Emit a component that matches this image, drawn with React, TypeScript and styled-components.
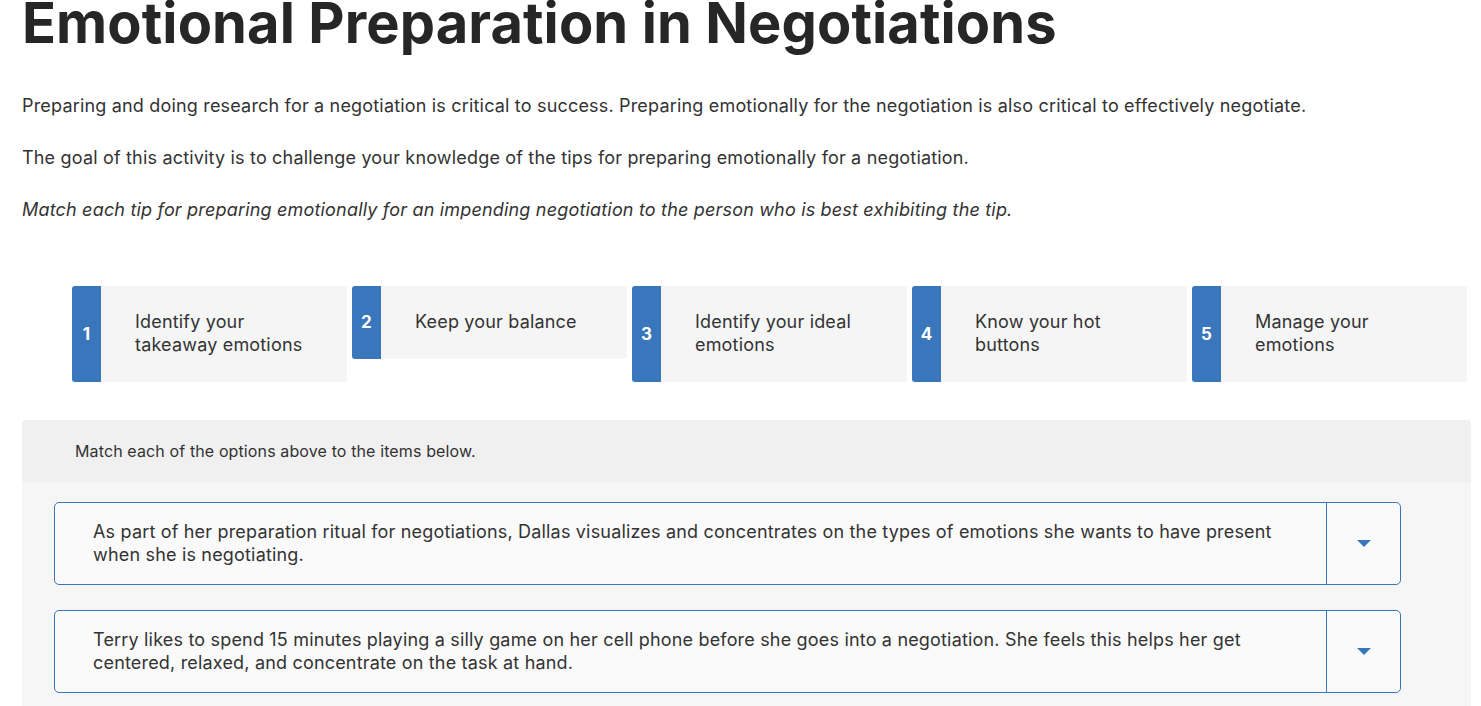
import React from "react"
import styled, { createGlobalStyle } from "styled-components"

const GlobalStyle = createGlobalStyle`
    html, body {
        margin: 0;
        padding: 0;
        background: #ffffff;
    }
    body {
        font-family: Inter, "Liberation Sans", Arial, sans-serif;
        color: #333333;
        letter-spacing: 0.18px;
        -webkit-font-smoothing: antialiased;
    }
`

const Page = styled.div`
    padding: 0 10px 0 22px;
    overflow: hidden;
`

const Title = styled.h1`
    margin: 0;
    font-size: 56px;
    line-height: 0.85;
    font-weight: 700;
    letter-spacing: 0.1px;
    color: #262626;
`

const Intro = styled.p<{ $italic?: boolean }>`
    margin: 0 0 26px;
    font-size: 18px;
    line-height: 26px;
    font-style: ${p => (p.$italic ? "italic" : "normal")};
    &:first-of-type {
        margin-top: 45px;
    }
`

const TipRow = styled.div`
    display: flex;
    align-items: flex-start;
    gap: 5px;
    margin: 63px 0 0 50px;
`

const TipCard = styled.div`
    display: flex;
    width: 275px;
    background: #f5f5f5;
    border-radius: 3px;
    overflow: hidden;
`

const NumberTab = styled.div`
    flex: 0 0 29px;
    display: flex;
    align-items: center;
    justify-content: center;
    background: #3a76bb;
    color: #ffffff;
    font-weight: 700;
    font-size: 17px;
`

const TipText = styled.div`
    padding: 24px 40px 26px 34px;
    font-size: 18px;
    line-height: 23px;
`

const MatchPanel = styled.section`
    margin-top: 38px;
    background: #f6f6f6;
    border-radius: 4px 4px 0 0;
    overflow: hidden;
`

const PanelHeader = styled.div`
    display: flex;
    align-items: center;
    height: 62px;
    padding-left: 53px;
    background: #f0f0f0;
    font-size: 16px;
    letter-spacing: 0.12px;
`

const PanelBody = styled.div`
    display: flex;
    flex-direction: column;
    gap: 25px;
    padding: 20px 70px 20px 32px;
`

const MatchItem = styled.div`
    display: flex;
    border: 1px solid #3a76bb;
    border-radius: 5px;
    background: #fafafa;
`

const ItemText = styled.div`
    flex: 1;
    padding: 17px 38px 18px 38px;
    font-size: 18px;
    line-height: 23px;
`

const DropButton = styled.div`
    flex: 0 0 73px;
    display: flex;
    align-items: center;
    justify-content: center;
    border-left: 1px solid #3a76bb;
`

const Caret = styled.span`
    width: 0;
    height: 0;
    border-left: 7px solid transparent;
    border-right: 7px solid transparent;
    border-top: 7px solid #3a76bb;
`

const tips = [
    "Identify your takeaway emotions",
    "Keep your balance",
    "Identify your ideal emotions",
    "Know your hot buttons",
    "Manage your emotions",
]

const items = [
    "As part of her preparation ritual for negotiations, Dallas visualizes and concentrates on the types of emotions she wants to have present when she is negotiating.",
    "Terry likes to spend 15 minutes playing a silly game on her cell phone before she goes into a negotiation. She feels this helps her get centered, relaxed, and concentrate on the task at hand.",
]

const App: React.FC = () => {
    return (
        <Page>
            <GlobalStyle />
            <Title>Emotional Preparation in Negotiations</Title>
            <Intro>
                Preparing and doing research for a negotiation is critical to success. Preparing emotionally for the negotiation is also critical to effectively negotiate.
            </Intro>
            <Intro>
                The goal of this activity is to challenge your knowledge of the tips for preparing emotionally for a negotiation.
            </Intro>
            <Intro $italic>
                Match each tip for preparing emotionally for an impending negotiation to the person who is best exhibiting the tip.
            </Intro>

            <TipRow>
                {tips.map((tip, i) => (
                    <TipCard key={tip}>
                        <NumberTab>{i + 1}</NumberTab>
                        <TipText>{tip}</TipText>
                    </TipCard>
                ))}
            </TipRow>

            <MatchPanel>
                <PanelHeader>Match each of the options above to the items below.</PanelHeader>
                <PanelBody>
                    {items.map(text => (
                        <MatchItem key={text}>
                            <ItemText>{text}</ItemText>
                            <DropButton>
                                <Caret />
                            </DropButton>
                        </MatchItem>
                    ))}
                </PanelBody>
            </MatchPanel>
        </Page>
    )
}

export default App
